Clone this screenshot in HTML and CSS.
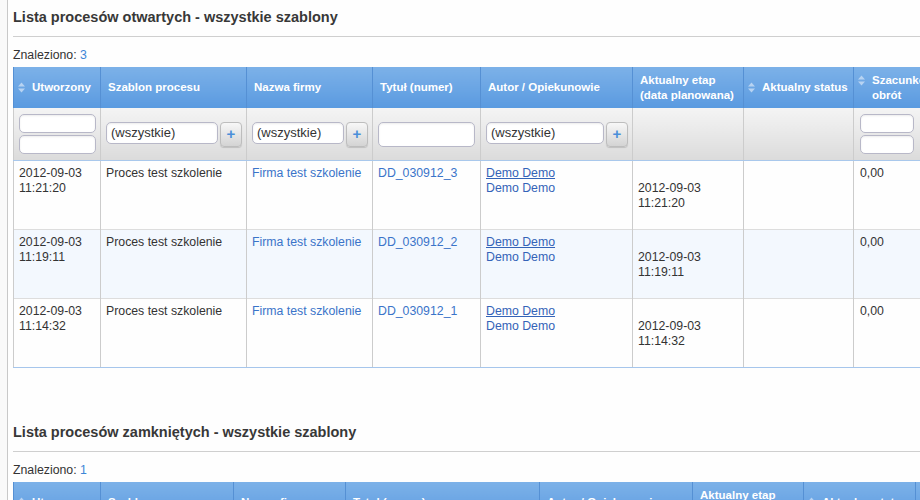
FILE: index.html
```html
<!DOCTYPE html>
<html>
<head>
    <meta charset="utf-8">
    <link rel="stylesheet" href="styles.css">
</head>
<body>
    <div class="page">
        <!-- Open processes -->
        <div class="section">
            <h2 class="section-title">Lista procesów otwartych - wszystkie szablony</h2>
            <div class="found">Znaleziono: <span class="found-count">3</span></div>
            <table class="grid grid-open">
                <colgroup>
                    <col style="width: 87px">
                    <col style="width: 146px">
                    <col style="width: 126px">
                    <col style="width: 108px">
                    <col style="width: 152px">
                    <col style="width: 111px">
                    <col style="width: 110px">
                    <col style="width: 120px">
                </colgroup>
                <thead>
                    <tr class="head-row">
                        <th class="sortable"><div class="sort-wrap"><svg class="sort-icon" width="7" height="11" viewBox="0 0 7 11"><polygon points="0,4.5 3.5,0.5 7,4.5"/><polygon points="0,6.5 3.5,10.5 7,6.5"/></svg><span>Utworzony</span></div></th>
                        <th>Szablon procesu</th>
                        <th>Nazwa firmy</th>
                        <th>Tytuł (numer)</th>
                        <th>Autor / Opiekunowie</th>
                        <th>Aktualny etap (data planowana)</th>
                        <th class="sortable"><div class="sort-wrap"><svg class="sort-icon" width="7" height="11" viewBox="0 0 7 11"><polygon points="0,4.5 3.5,0.5 7,4.5"/><polygon points="0,6.5 3.5,10.5 7,6.5"/></svg><span>Aktualny status</span></div></th>
                        <th class="sortable"><div class="sort-wrap"><svg class="sort-icon" width="7" height="11" viewBox="0 0 7 11"><polygon points="0,4.5 3.5,0.5 7,4.5"/><polygon points="0,6.5 3.5,10.5 7,6.5"/></svg><span>Szacunkowy<br>obrót</span></div></th>
                    </tr>
                    <tr class="filter-row">
                        <td><div class="range"><input class="filter-input small" type="text"><input class="filter-input small" type="text"></div></td>
                        <td><div class="select-group"><input class="filter-input select" type="text" value="(wszystkie)" readonly><button class="add-btn">+</button></div></td>
                        <td><div class="select-group"><input class="filter-input select" type="text" value="(wszystkie)" readonly><button class="add-btn">+</button></div></td>
                        <td class="pad-right"><input class="filter-input" type="text"></td>
                        <td><div class="select-group"><input class="filter-input select" type="text" value="(wszystkie)" readonly><button class="add-btn">+</button></div></td>
                        <td></td>
                        <td></td>
                        <td class="pad-wide"><div class="range narrow"><input class="filter-input small" type="text"><input class="filter-input small" type="text"></div></td>
                    </tr>
                </thead>
                <tbody>
                    <tr class="data-row">
                        <td>2012-09-03<br>11:21:20</td>
                        <td>Proces test szkolenie</td>
                        <td><a href="#">Firma test szkolenie</a></td>
                        <td><a href="#">DD_030912_3</a></td>
                        <td><a href="#" class="owner-link">Demo Demo</a><br><span class="owner">Demo Demo</span></td>
                        <td><div class="stage">&nbsp;</div>2012-09-03<br>11:21:20</td>
                        <td></td>
                        <td class="num">0,00</td>
                    </tr>
                    <tr class="data-row alt">
                        <td>2012-09-03<br>11:19:11</td>
                        <td>Proces test szkolenie</td>
                        <td><a href="#">Firma test szkolenie</a></td>
                        <td><a href="#">DD_030912_2</a></td>
                        <td><a href="#" class="owner-link">Demo Demo</a><br><span class="owner">Demo Demo</span></td>
                        <td><div class="stage">&nbsp;</div>2012-09-03<br>11:19:11</td>
                        <td></td>
                        <td class="num">0,00</td>
                    </tr>
                    <tr class="data-row">
                        <td>2012-09-03<br>11:14:32</td>
                        <td>Proces test szkolenie</td>
                        <td><a href="#">Firma test szkolenie</a></td>
                        <td><a href="#">DD_030912_1</a></td>
                        <td><a href="#" class="owner-link">Demo Demo</a><br><span class="owner">Demo Demo</span></td>
                        <td><div class="stage">&nbsp;</div>2012-09-03<br>11:14:32</td>
                        <td></td>
                        <td class="num">0,00</td>
                    </tr>
                </tbody>
            </table>
        </div>

        <!-- Closed processes -->
        <div class="section">
            <h2 class="section-title">Lista procesów zamkniętych - wszystkie szablony</h2>
            <div class="found">Znaleziono: <span class="found-count">1</span></div>
            <table class="grid grid-closed">
                <colgroup>
                    <col style="width: 87px">
                    <col style="width: 133px">
                    <col style="width: 112px">
                    <col style="width: 194px">
                    <col style="width: 153px">
                    <col style="width: 111px">
                    <col style="width: 112px">
                    <col style="width: 120px">
                </colgroup>
                <thead>
                    <tr class="head-row">
                        <th class="sortable"><div class="sort-wrap"><svg class="sort-icon" width="7" height="11" viewBox="0 0 7 11"><polygon points="0,4.5 3.5,0.5 7,4.5"/><polygon points="0,6.5 3.5,10.5 7,6.5"/></svg><span>Utworzony</span></div></th>
                        <th>Szablon procesu</th>
                        <th>Nazwa firmy</th>
                        <th>Tytuł (numer)</th>
                        <th>Autor / Opiekunowie</th>
                        <th>Aktualny etap (data planowana)</th>
                        <th class="sortable"><div class="sort-wrap"><svg class="sort-icon" width="7" height="11" viewBox="0 0 7 11"><polygon points="0,4.5 3.5,0.5 7,4.5"/><polygon points="0,6.5 3.5,10.5 7,6.5"/></svg><span>Aktualny status</span></div></th>
                        <th class="sortable"><div class="sort-wrap"><svg class="sort-icon" width="7" height="11" viewBox="0 0 7 11"><polygon points="0,4.5 3.5,0.5 7,4.5"/><polygon points="0,6.5 3.5,10.5 7,6.5"/></svg><span>Szacunkowy<br>obrót</span></div></th>
                    </tr>
                </thead>
                <tbody>
                    <tr class="data-row">
                        <td>2012-09-03<br>11:05:10</td>
                        <td>Proces test szkolenie</td>
                        <td><a href="#">Firma test szkolenie</a></td>
                        <td><a href="#">DD_030912_0</a></td>
                        <td><a href="#" class="owner-link">Demo Demo</a><br><span class="owner">Demo Demo</span></td>
                        <td></td>
                        <td></td>
                        <td class="num">0,00</td>
                    </tr>
                </tbody>
            </table>
        </div>
    </div>
</body>
</html>
```

FILE: styles.css
```css
html, body {
    overflow: hidden;
}
body {
    margin: 0;
    font-family: "Liberation Sans", Arial, sans-serif;
    font-size: 12.3px;
    color: #333;
    background-color: #f9f9f9;
}
.page {
    margin-left: 7px;
    border-left: 1px solid #c8c8c8;
    background: #fefefe;
    padding: 8px 0 0 5px;
    min-height: 100vh;
    overflow: hidden;
}
.section + .section {
    margin-top: 55px;
}
.section-title {
    margin: 0;
    font-size: 14.5px;
    line-height: 18px;
    font-weight: bold;
    color: #383838;
    padding-bottom: 10px;
    border-bottom: 1px solid #cfcfcf;
}
.found {
    margin: 11px 0 4px;
    line-height: 15px;
}
.found-count {
    color: #3d86d6;
}
a {
    color: #3a74c9;
    text-decoration: none;
}
.grid {
    border-collapse: collapse;
    table-layout: fixed;
    font-size: 12.3px;
    line-height: 15px;
}
.grid-open {
    width: 960px;
}
.grid-closed {
    width: 1022px;
}
.grid th {
    height: 41px;
    padding: 0 3px 0 7px;
    background: linear-gradient(#7cb1e8, #5a9ae0);
    color: #fff;
    font-size: 11.5px;
    font-weight: bold;
    text-align: left;
    vertical-align: middle;
    border-left: 1px solid #5590d4;
}
.grid th.sortable {
    padding-left: 4px;
}
.sort-wrap {
    display: flex;
    align-items: flex-start;
    gap: 7px;
}
.sort-icon {
    fill: #b7d3f2;
    margin-top: 2px;
    flex-shrink: 0;
}
.filter-row td {
    height: 52px;
    padding: 0 4px 0 5px;
    background: linear-gradient(#f4f4f4, #dbdbdb);
    border-left: 1px solid #cccccc;
    border-bottom: 1px solid #a9c8ec;
    vertical-align: middle;
}
.filter-row td.pad-right {
    padding-right: 5px;
}
.filter-row td.pad-wide {
    padding-left: 6px;
}
.range {
    display: flex;
    flex-direction: column;
    gap: 2px;
}
.range.narrow {
    width: 54px;
}
.select-group {
    display: flex;
    align-items: flex-start;
    gap: 2px;
}
.filter-input {
    box-sizing: border-box;
    display: block;
    width: 100%;
    height: 25px;
    margin: 0;
    padding: 0 4px;
    border: 1px solid #b8b8c8;
    border-radius: 5px;
    background: #fff;
    box-shadow: inset 0 1px 2px rgba(0, 0, 0, 0.08);
    font-family: "Liberation Sans", Arial, sans-serif;
    font-size: 13px;
    color: #333;
    outline: none;
}
.filter-input.small {
    height: 19px;
}
.filter-input.select {
    height: 22px;
    flex: 1;
    min-width: 0;
}
.add-btn {
    flex-shrink: 0;
    width: 22px;
    height: 25px;
    padding: 0;
    border: 1px solid #bdbdbd;
    border-radius: 4px;
    background: linear-gradient(#f7f7f7, #d4d4d4);
    box-shadow: 0 1px 1px rgba(0, 0, 0, 0.15);
    color: #4b8fd9;
    font-family: "Liberation Sans", Arial, sans-serif;
    font-size: 15px;
    font-weight: bold;
    line-height: 20px;
}
.data-row td {
    height: 58px;
    padding: 5px;
    vertical-align: top;
    background: #fefefe;
    border-left: 1px solid #cccccc;
    border-top: 1px solid #dddddd;
}
.data-row.alt td {
    background: #f3f8fe;
}
.data-row td.num {
    padding-left: 6px;
}
.grid-open tbody tr:last-child td {
    border-bottom: 1px solid #a6c6ec;
}
.grid a.owner-link {
    color: #3463b8;
    text-decoration: underline;
}
.owner {
    color: #3463b8;
}
```
